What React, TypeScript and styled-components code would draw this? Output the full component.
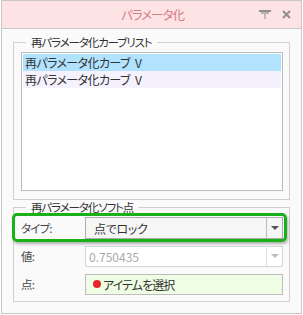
import styled, { createGlobalStyle } from 'styled-components';

const GlobalStyle = createGlobalStyle`
    html, body {
        margin: 0;
        padding: 0;
        background: #ffffff;
    }
    body {
        font-family: "Noto Sans CJK JP", "Noto Sans", sans-serif;
        font-feature-settings: "palt";
        font-size: 12px;
        color: #333;
    }
`

const Window = styled.div`
    box-sizing: border-box;
    width: 301px;
    height: 314px;
    margin-left: 1px;
    border: 1px solid #c9c9c9;
    background: #fafafa;
    display: flex;
    flex-direction: column;
`

const TitleBar = styled.div`
    position: relative;
    height: 27px;
    flex: none;
    background: #fde3e3;
    border-bottom: 1px solid #c8c8c8;
    display: flex;
    align-items: center;
    justify-content: center;
`

const Title = styled.span`
    font-size: 12.5px;
    color: #d47c84;
    letter-spacing: -1px;
    margin-left: 2px;
`

const TitleTools = styled.div`
    position: absolute;
    right: 10px;
    top: 0;
    bottom: 0;
    display: flex;
    align-items: center;
    gap: 11px;
`

const Body = styled.div`
    flex: 1;
    padding: 6px 11px 0 11px;
    display: flex;
    flex-direction: column;
`

const Group = styled.fieldset<{ $height: number }>`
    position: relative;
    margin: 0;
    padding: 0 6px 0 7px;
    height: ${p => p.$height}px;
    box-sizing: border-box;
    border: 1px solid #cfcfcf;
    border-radius: 0;
    min-width: 0;
`

const Legend = styled.legend`
    margin-left: 5px;
    padding: 0 5px;
    font-size: 11.5px;
    line-height: 14px;
    letter-spacing: -1.1px;
    color: #333;
`

const ListBox = styled.div`
    margin-top: 3px;
    height: 139px;
    box-sizing: border-box;
    border: 1px solid #bcbcbc;
    background: #ffffff;
    padding: 1px;
`

const ListItem = styled.div<{ $selected?: boolean }>`
    height: 17px;
    line-height: 17px;
    padding-left: 2px;
    font-size: 12px;
    letter-spacing: -0.6px;
    word-spacing: 3px;
    color: #333;
    background: ${p => (p.$selected ? '#b1e3ff' : '#f5f1fd')};
`

const Rows = styled.div`
    display: flex;
    flex-direction: column;
    padding-top: 3px;
    gap: 6px;
`

const Row = styled.div<{ $highlight?: boolean }>`
    position: relative;
    display: flex;
    align-items: center;
    height: 22px;

    ${p => p.$highlight && `
        &::after {
            content: '';
            position: absolute;
            left: -9px;
            right: -4px;
            top: -4px;
            bottom: -3px;
            border: 3px solid #19b019;
            border-radius: 5px;
            box-shadow: 1px 2px 3px rgba(0, 0, 0, 0.3);
            pointer-events: none;
        }
    `}
`

const Label = styled.span`
    width: 64px;
    flex: none;
    font-size: 11.5px;
    letter-spacing: -0.8px;
    color: #444;
`

const Combo = styled.div<{ $disabled?: boolean }>`
    flex: 1;
    height: ${p => (p.$disabled ? 21 : 22)}px;
    box-sizing: border-box;
    display: flex;
    align-items: stretch;
    border: 1px solid ${p => (p.$disabled ? '#d6d6d6' : '#ababab')};
    background: ${p => (p.$disabled ? '#ffffff' : '#f6f6f6')};
`

const ComboText = styled.span<{ $disabled?: boolean }>`
    flex: 1;
    display: flex;
    align-items: center;
    padding-left: ${p => (p.$disabled ? 3 : 8)}px;
    font-size: 12px;
    letter-spacing: ${p => (p.$disabled ? 0 : -0.3)}px;
    color: ${p => (p.$disabled ? '#aaaaaa' : '#333')};
`

const ComboButton = styled.span<{ $disabled?: boolean }>`
    width: 15px;
    flex: none;
    display: flex;
    align-items: center;
    justify-content: center;
    border-left: 1px solid ${p => (p.$disabled ? '#e0e0e0' : '#bdbdbd')};
`

const Arrow = styled.span<{ $disabled?: boolean }>`
    width: 0;
    height: 0;
    border-left: 4px solid transparent;
    border-right: 4px solid transparent;
    border-top: 4px solid ${p => (p.$disabled ? '#bbbbbb' : '#555555')};
`

const PickBox = styled.div`
    flex: 1;
    height: 21px;
    box-sizing: border-box;
    display: flex;
    align-items: center;
    gap: 2px;
    padding-left: 7px;
    border: 1px solid #bdbdbd;
    background: #effde5;
    font-size: 12px;
    letter-spacing: -0.9px;
    color: #333;
`

const Dot = styled.span`
    width: 8px;
    height: 8px;
    border-radius: 50%;
    background: #e8262a;
`

const PinIcon = () => (
    <svg width="12" height="9" viewBox="0 0 12 9">
        <rect x="0" y="0" width="12" height="2" fill="#8f8f8f" />
        <rect x="2" y="2" width="8" height="2" fill="#8f8f8f" opacity="0.6" />
        <rect x="5.5" y="4" width="1" height="5" fill="#8f8f8f" />
    </svg>
)

const CloseIcon = () => (
    <svg width="9" height="9" viewBox="0 0 9 9">
        <path d="M1 1 L8 8 M8 1 L1 8" stroke="#8f8f8f" strokeWidth="2" />
    </svg>
)

const App: React.FC = () => {
    return (
        <>
            <GlobalStyle />
            <Window>
                <TitleBar>
                    <Title>パラメータ化</Title>
                    <TitleTools>
                        <PinIcon />
                        <CloseIcon />
                    </TitleTools>
                </TitleBar>
                <Body>
                    <Group $height={165}>
                        <Legend>再パラメータ化カーブリスト</Legend>
                        <ListBox>
                            <ListItem $selected>再パラメータ化カーブ V</ListItem>
                            <ListItem>再パラメータ化カーブ V</ListItem>
                        </ListBox>
                    </Group>
                    <Group $height={102}>
                        <Legend>再パラメータ化ソフト点</Legend>
                        <Rows>
                            <Row $highlight>
                                <Label>タイプ:</Label>
                                <Combo>
                                    <ComboText>点でロック</ComboText>
                                    <ComboButton>
                                        <Arrow />
                                    </ComboButton>
                                </Combo>
                            </Row>
                            <Row>
                                <Label>値:</Label>
                                <Combo $disabled>
                                    <ComboText $disabled>0.750435</ComboText>
                                    <ComboButton $disabled>
                                        <Arrow $disabled />
                                    </ComboButton>
                                </Combo>
                            </Row>
                            <Row>
                                <Label>点:</Label>
                                <PickBox>
                                    <Dot />
                                    アイテムを選択
                                </PickBox>
                            </Row>
                        </Rows>
                    </Group>
                </Body>
            </Window>
        </>
    );
}

export default App;
